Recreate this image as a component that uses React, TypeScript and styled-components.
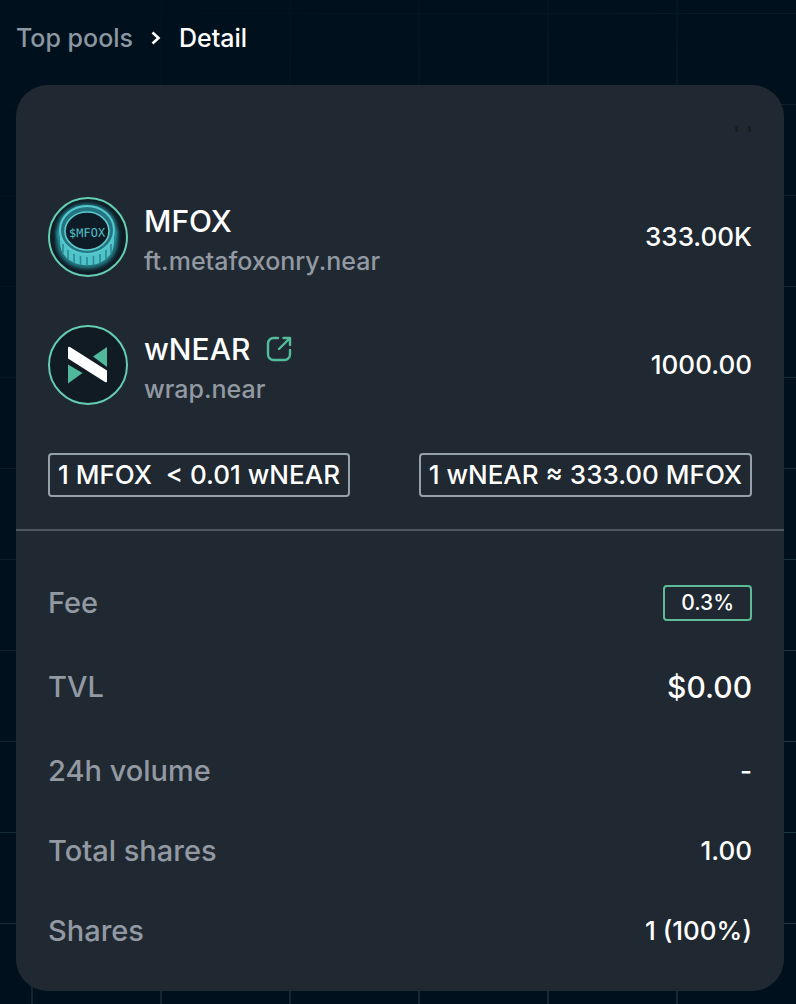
import React from "react";
import styled, { createGlobalStyle } from "styled-components";

const GlobalStyle = createGlobalStyle`
  *, *::before, *::after { box-sizing: border-box; }
  body {
    margin: 0;
    background-color: #00111d;
    font-family: Inter, "Liberation Sans", sans-serif;
    font-weight: 500;
    color: #ffffff;
  }
`;

const Page = styled.div`
  min-height: 100vh;
  padding: 16px 12px 13px 16px;
  background-color: #00111d;
  background-image:
    linear-gradient(150deg, #00111d 0%, rgba(0, 17, 29, 0.85) 25%, rgba(0, 17, 29, 0.1) 80%),
    linear-gradient(90deg, #182c35 2px, transparent 2px),
    linear-gradient(180deg, #223c45 1px, transparent 1px);
  background-size: 100% 100%, 129px 100%, 100% 91px;
  background-position: 0 0, 31px 0, 0 13px;
`;

const Breadcrumb = styled.nav`
  display: flex;
  align-items: center;
  gap: 16px;
  height: 44px;
  margin-bottom: 25px;
  font-size: 25px;
  line-height: 32px;
`;

const Crumb = styled.a`
  color: #8b98a3;
  font-weight: 450;
  text-decoration: none;
`;

const Current = styled.span`
  color: #ffffff;
`;

const Card = styled.main`
  border-radius: 32px;
  background: #202931;
`;

const Top = styled.section`
  display: flex;
  flex-direction: column;
  gap: 48px;
  padding: 32px;
  border-bottom: 2px solid #4c5762;
`;

const Toolbar = styled.div`
  display: flex;
  justify-content: flex-end;
  height: 32px;
`;

const FavoriteButton = styled.button`
  width: 24px;
  height: 24px;
  padding: 0;
  border: 0;
  background: none;
`;

const Token = styled.div`
  display: flex;
  align-items: center;
  gap: 16px;
  height: 80px;
`;

const TokenText = styled.div`
  flex: 1;
  padding-top: 4px;
`;

const TokenName = styled.div`
  display: flex;
  align-items: center;
  gap: 16px;
  font-size: 30px;
  line-height: 44px;
`;

const TokenAddress = styled.div`
  color: #9299a3;
  font-size: 25px;
  font-weight: 450;
  line-height: 36px;
`;

const ExternalLink = styled.a`
  display: flex;
  color: #52bd9b;
`;

const Amount = styled.span<{ $large?: boolean }>`
  font-size: ${(p) => (p.$large ? 30 : 26)}px;
  line-height: 40px;
`;

const Rates = styled.div`
  display: flex;
  justify-content: space-between;
`;

const Rate = styled.div`
  padding: 0 8px;
  border: 2px solid #94a0aa;
  border-radius: 4px;
  font-size: 26px;
  line-height: 40px;
  white-space: pre;
`;

const Stats = styled.dl`
  display: flex;
  flex-direction: column;
  gap: 40px;
  margin: 0;
  padding: 52px 32px 40px;
`;

const Stat = styled.div<{ $tall?: boolean }>`
  display: flex;
  align-items: center;
  justify-content: space-between;
  height: ${(p) => (p.$tall ? 48 : 40)}px;
`;

const Label = styled.dt`
  color: #9299a3;
  font-size: 29px;
  font-weight: 500;
  line-height: 40px;
`;

const Value = styled.dd`
  margin: 0;
`;

const Fee = styled.span`
  display: block;
  padding: 0 16px;
  border: 2px solid #5dbb98;
  border-radius: 4px;
  font-size: 21px;
  line-height: 32px;
`;

const ChevronIcon = () => (
  <svg width="14" height="16" viewBox="0 0 14 16" fill="none" stroke="#fff" strokeWidth="2.6" aria-hidden="true">
    <path d="M3.5 2.5 9.5 8l-6 5.5" />
  </svg>
);

const ExternalIcon = () => (
  <svg width="26" height="26" viewBox="0 0 26 26" fill="none" stroke="currentColor" strokeWidth="2.4" strokeLinecap="round" strokeLinejoin="round" aria-hidden="true">
    <path d="M12 2H7.5A5.5 5.5 0 0 0 2 7.5V18.5A5.5 5.5 0 0 0 7.5 24H18.5A5.5 5.5 0 0 0 24 18.5V14" />
    <path d="M17.5 2H24V9M23.5 2.5 13 13" />
  </svg>
);

const FavoriteIcon = () => (
  <svg width="24" height="24" viewBox="0 0 24 24" stroke="#191d20" strokeWidth="2.5" aria-hidden="true">
    <path d="M8.5 9v6M21.5 9v6" />
  </svg>
);

const MfoxLogo = () => (
  <svg width="80" height="80" viewBox="0 0 80 80" fill="none" aria-hidden="true">
    <defs>
      <filter id="glow" x="-20%" y="-20%" width="140%" height="140%">
        <feGaussianBlur stdDeviation="2" />
      </filter>
      <filter id="neon" x="-10%" y="-10%" width="120%" height="120%">
        <feGaussianBlur stdDeviation="0.5" />
      </filter>
    </defs>
    <circle cx="40" cy="40" r="39" fill="#101c25" stroke="#66cdb3" strokeWidth="2" />
    <path d="M11 33v11c0 33 56 33 56 0V33" stroke="#29a5b0" strokeWidth="4" filter="url(#glow)" />
    <ellipse cx="39" cy="33" rx="27" ry="23" stroke="#29a5b0" strokeWidth="5" filter="url(#glow)" />
    <g filter="url(#neon)">
      <path d="M12 34v11c0 31 54 31 54 0V34Z" fill="#4fc3ca" />
      <path d="M15 47v9M20 53v9M26 57v9M32.5 59v9M39 60v9M45.5 59v9M52 57v9M58 53v9M63 47v9" stroke="#2f8791" strokeWidth="1.6" />
      <ellipse cx="39" cy="33" rx="27" ry="24" fill="#247580" stroke="#56c8cf" strokeWidth="2" />
      <ellipse cx="39" cy="34" rx="22" ry="19" fill="#101d27" stroke="#5dc9ce" strokeWidth="1.6" />
    </g>
    <text x="39" y="40" textAnchor="middle" fill="#55c0c8" fontFamily="DejaVu Sans Mono, monospace" fontSize="12" fontWeight="400" transform="rotate(-1 39 36)">
      $MFOX
    </text>
  </svg>
);

const NearLogo = () => (
  <svg width="80" height="80" viewBox="0 0 80 80" aria-hidden="true">
    <circle cx="40" cy="40" r="39" fill="#101b24" stroke="#66cdb3" strokeWidth="2" />
    <path d="M59 22v20L45 31.5ZM20 39.5v19L34.5 48Z" fill="#50b99b" />
    <path d="M20 23q0-2 2-1L59 45.5V56q0 2-2 1L20 33.5Z" fill="#fff" />
  </svg>
);

export default function App() {
  return (
    <>
      <GlobalStyle />
      <Page>
        <Breadcrumb aria-label="Breadcrumb">
          <Crumb href="#pools">Top pools</Crumb>
          <ChevronIcon />
          <Current aria-current="page">Detail</Current>
        </Breadcrumb>
        <Card>
          <Top>
            <Toolbar>
              <FavoriteButton type="button" aria-label="Add to favorites">
                <FavoriteIcon />
              </FavoriteButton>
            </Toolbar>
            <Token>
              <MfoxLogo />
              <TokenText>
                <TokenName>MFOX</TokenName>
                <TokenAddress>ft.metafoxonry.near</TokenAddress>
              </TokenText>
              <Amount>333.00K</Amount>
            </Token>
            <Token>
              <NearLogo />
              <TokenText>
                <TokenName>
                  wNEAR
                  <ExternalLink href="#wrap" aria-label="Open wNEAR">
                    <ExternalIcon />
                  </ExternalLink>
                </TokenName>
                <TokenAddress>wrap.near</TokenAddress>
              </TokenText>
              <Amount>1000.00</Amount>
            </Token>
            <Rates>
              <Rate>{"1 MFOX  < 0.01 wNEAR"}</Rate>
              <Rate>1 wNEAR ≈ 333.00 MFOX</Rate>
            </Rates>
          </Top>
          <Stats>
            <Stat>
              <Label>Fee</Label>
              <Value><Fee>0.3%</Fee></Value>
            </Stat>
            <Stat $tall>
              <Label>TVL</Label>
              <Value><Amount $large>$0.00</Amount></Value>
            </Stat>
            <Stat>
              <Label>24h volume</Label>
              <Value><Amount>-</Amount></Value>
            </Stat>
            <Stat>
              <Label>Total shares</Label>
              <Value><Amount>1.00</Amount></Value>
            </Stat>
            <Stat>
              <Label>Shares</Label>
              <Value><Amount>1 (100%)</Amount></Value>
            </Stat>
          </Stats>
        </Card>
      </Page>
    </>
  );
}
